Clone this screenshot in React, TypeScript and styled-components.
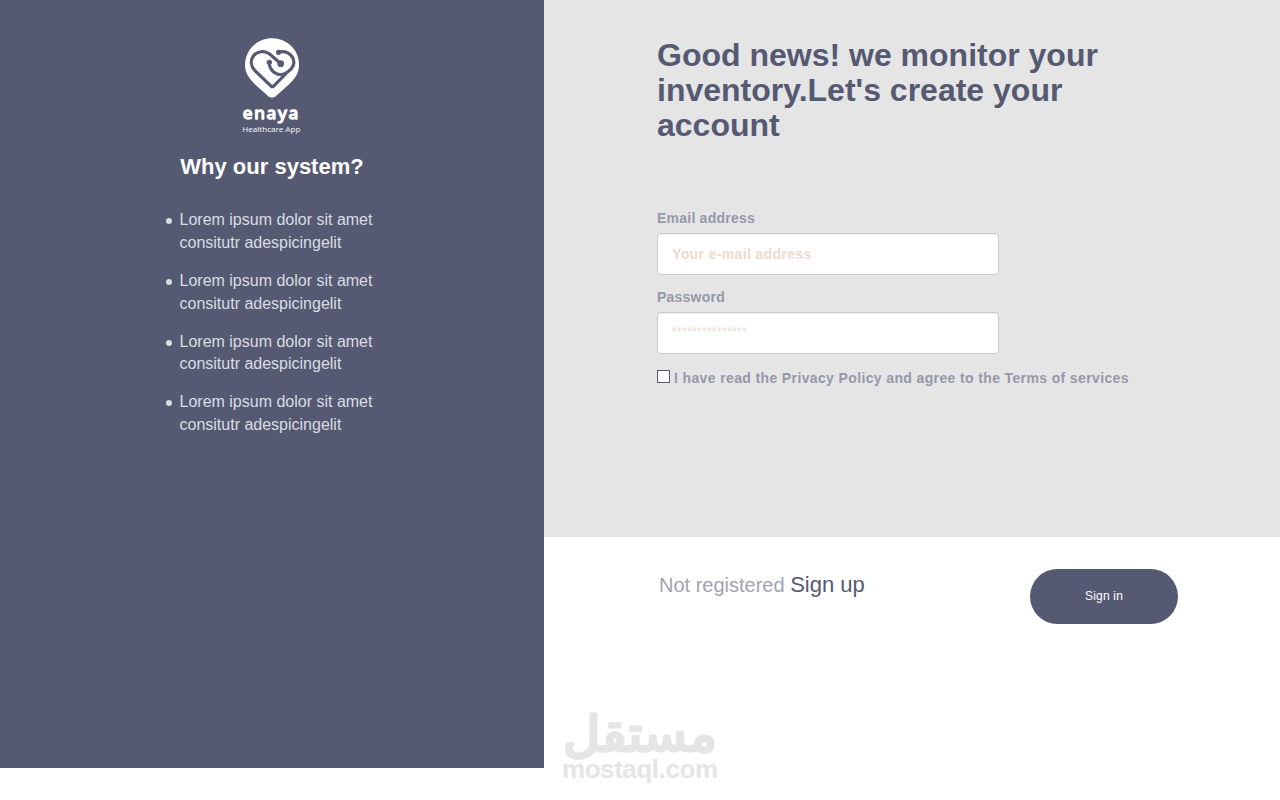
import { useState } from 'react'
import styled, { createGlobalStyle } from 'styled-components'

const reasons = [1, 2, 3, 4].map((id) => ({
  id,
  text: 'Lorem ipsum dolor sit amet consitutr adespicingelit',
}))

const EnayaLogo = () => (
  <LogoSvg viewBox="0 0 300 330" role="img" aria-label="enaya Healthcare App">
    <path
      d="M150 25C105 25 69 60 69 104C69 131 83 146 101 165L139 199Q150 207 161 199L199 165C218 146 231 131 231 104C231 60 195 25 150 25Z"
      fill="#fff"
    />
    <g fill="none" stroke="#555a72" strokeWidth="9.5" strokeLinecap="round" strokeLinejoin="round">
      <path d="M176 101L143 72C127 60 104 64 94 78C84 92 87 109 98 121L148 169Q151 171 154 169L191 132" />
      <path d="M170 66C190 61 208 71 214 87C219 103 210 117 197 126C184 136 168 136 156 127C146 119 141 109 142 97" />
    </g>
    <g fill="#555a72">
      <circle cx="170" cy="67" r="8" />
      <circle cx="176" cy="101" r="10" />
      <circle cx="142" cy="97" r="8" />
    </g>
    <BrandText x="62" y="268" textLength="172" lengthAdjust="spacingAndGlyphs">
      enaya
    </BrandText>
    <BrandCaption x="61" y="305" textLength="174" lengthAdjust="spacingAndGlyphs">
      Healthcare App
    </BrandCaption>
  </LogoSvg>
)

const Watermark = () => (
  <WatermarkSvg viewBox="0 0 180 95">
    <ArabicText x="167" y="51" textLength="154" lengthAdjust="spacingAndGlyphs">
      مستقل
    </ArabicText>
    <LatinText x="12" y="78" textLength="156">
      mostaql.com
    </LatinText>
  </WatermarkSvg>
)

export default function App() {
  const [email, setEmail] = useState('')
  const [password, setPassword] = useState('')
  const [agreed, setAgreed] = useState(false)

  return (
    <>
      <GlobalStyle />
      <Page>
        <Sidebar>
          <EnayaLogo />
          <SidebarTitle>Why our system?</SidebarTitle>
          <ReasonList>
            {reasons.map(({ id, text }) => (
              <Reason key={id}>{text}</Reason>
            ))}
          </ReasonList>
        </Sidebar>
        <Main>
          <FormPanel>
            <Title>Good news! we monitor your inventory.Let's create your account</Title>
            <Label htmlFor="email">Email address</Label>
            <Input
              id="email"
              placeholder="Your e-mail address"
              value={email}
              onChange={(e) => setEmail(e.target.value)}
            />
            <Label htmlFor="password">Password</Label>
            <Input
              id="password"
              type="password"
              placeholder="***************"
              value={password}
              onChange={(e) => setPassword(e.target.value)}
            />
            <Agreement>
              <Checkbox
                type="checkbox"
                checked={agreed}
                onChange={(e) => setAgreed(e.target.checked)}
              />
              I have read the Privacy Policy and agree to the Terms of services
            </Agreement>
          </FormPanel>
          <Actions>
            <Register>
              Not registered <SignUp href="#">Sign up</SignUp>
            </Register>
            <SignInButton type="button">Sign in</SignInButton>
          </Actions>
          <Watermark />
        </Main>
      </Page>
    </>
  )
}

const GlobalStyle = createGlobalStyle`
  * {
    box-sizing: border-box;
  }
  body {
    margin: 0;
    background: #fff;
    font-family: 'Liberation Sans', Arial, sans-serif;
    line-height: 1.42857;
  }
`

const Page = styled.div`
  display: flex;
  align-items: flex-start;
  height: 800px;
  overflow: hidden;
`

const Sidebar = styled.aside`
  display: flex;
  flex-direction: column;
  align-items: center;
  width: 544px;
  height: 768px;
  padding-top: 30px;
  background: #555a72;
`

const LogoSvg = styled.svg`
  width: 100px;
  height: 110px;
`

const SidebarTitle = styled.h2`
  margin: 15px 0 0;
  color: #fff;
  font-size: 22px;
  line-height: 24px;
`

const ReasonList = styled.ul`
  width: 213px;
  margin: 30.2px 0 0;
  padding: 0;
  list-style: none;
`

const Reason = styled.li`
  display: flex;
  margin-bottom: 15px;
  color: #dadce3;
  font-size: 16px;
  line-height: 22.86px;

  &::before {
    content: '';
    flex: none;
    width: 6px;
    height: 6px;
    margin: 9px 8px 0 0;
    border-radius: 50%;
    background: #dadce3;
  }
`

const Main = styled.main`
  flex: 1;
`

const FormPanel = styled.form`
  display: flex;
  flex-direction: column;
  align-items: flex-start;
  height: 537px;
  padding: 38px 113px 0;
  background: #e5e5e5;
`

const Title = styled.h1`
  width: 460px;
  margin: 0 0 64px;
  color: #555a72;
  font-size: 32px;
  line-height: 35.2px;
`

const Label = styled.label`
  margin-bottom: 5px;
  color: #9698a9;
  font-size: 14px;
  font-weight: bold;
  line-height: 20px;
  letter-spacing: 0.23px;
`

const Input = styled.input`
  width: 342px;
  height: 42px;
  margin-bottom: 12px;
  padding: 0 14px;
  border: 1px solid #ccc;
  border-radius: 4px;
  box-shadow: inset 0 1px 1px rgba(0, 0, 0, 0.075);
  background: #fff;
  color: #555a72;
  font: bold 14px 'Liberation Sans', Arial, sans-serif;
  letter-spacing: 0.36px;

  &::placeholder {
    color: #ebdbd0;
    opacity: 1;
  }

  &[type='password'] {
    padding-bottom: 3px;
  }

  &[type='password']::placeholder {
    font-weight: normal;
    font-size: 12px;
    letter-spacing: 0.33px;
  }
`

const Agreement = styled.label`
  display: flex;
  align-items: center;
  gap: 4px;
  margin-top: 2px;
  color: #9698a9;
  font-size: 14px;
  font-weight: bold;
  line-height: 20px;
  letter-spacing: 0.37px;
  white-space: nowrap;
`

const Checkbox = styled.input`
  appearance: none;
  width: 13px;
  height: 13px;
  margin: 0 0 3px;
  border: 1px solid #555a72;
  background: #fff;

  &:checked {
    background: #555a72;
  }
`

const Actions = styled.div`
  display: flex;
  justify-content: space-between;
  align-items: flex-start;
  height: 163px;
  padding: 32px 102px 0 115px;
`

const Register = styled.p`
  margin: 0;
  color: #a1a4b2;
  font-size: 20px;
  line-height: 31px;
`

const SignUp = styled.a`
  color: #555a72;
  font-size: 22px;
  text-decoration: none;
`

const SignInButton = styled.button`
  width: 148px;
  height: 55px;
  padding: 0 0 2px;
  border: 0;
  border-radius: 28px;
  background: #555a72;
  color: #fff;
  font: 12px 'Liberation Sans', Arial, sans-serif;
  letter-spacing: 0.2px;
`

const WatermarkSvg = styled.svg`
  display: block;
  width: 180px;
  height: 95px;
  margin-left: 6px;
  overflow: visible;
  fill: #e5e5e5;
`

const BrandText = styled.text`
  fill: #fff;
  stroke: #fff;
  stroke-width: 4px;
  stroke-linejoin: round;
  font: 50px 'Noto Sans', sans-serif;
  letter-spacing: 5px;
`

const BrandCaption = styled.text`
  fill: #f0f1f4;
  font: 21px 'Noto Sans', sans-serif;
`

const ArabicText = styled.text`
  direction: rtl;
  stroke: #e5e5e5;
  stroke-width: 3px;
  stroke-linecap: round;
  stroke-linejoin: round;
  font: 49px 'DejaVu Sans', sans-serif;
`

const LatinText = styled.text`
  font: bold 26px 'Liberation Sans', Arial, sans-serif;
`
